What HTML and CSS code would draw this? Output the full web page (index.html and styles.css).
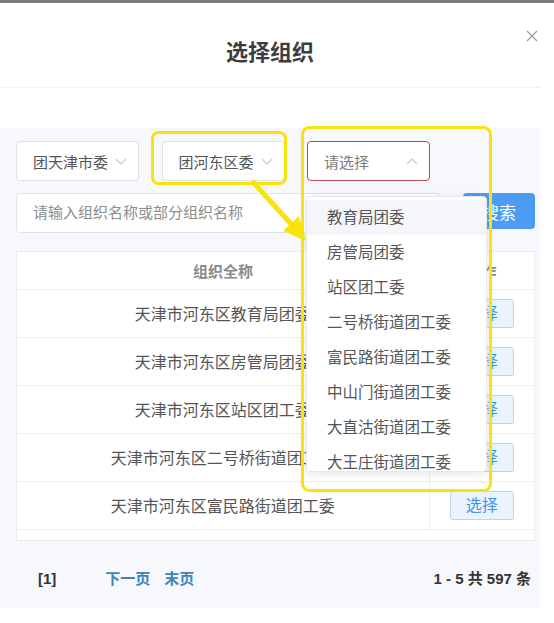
FILE: index.html
```html
<!DOCTYPE html>
<html lang="zh-CN">

<head>
    <meta charset="UTF-8" />
    <title>选择组织</title>
    <link rel="stylesheet" href="styles.css">
</head>

<body>
    <div class="page">
        <div class="topbar"></div>

        <!-- 弹窗头部 -->
        <div class="dialog-head">
            <h2 class="dialog-title">选择组织</h2>
            <a href="javascript:;" class="dialog-close">
                <svg width="12" height="12" viewBox="0 0 12 12">
                    <path d="M1 1L11 11M11 1L1 11" stroke="#9a9a9a" stroke-width="1.2" fill="none" />
                </svg>
            </a>
        </div>
        <div class="dialog-gap"></div>

        <div class="panel">
            <!-- 组织筛选 -->
            <div class="filters">
                <div class="select">
                    <span class="select-text">团天津市委</span>
                    <svg class="chevron" width="12" height="7" viewBox="0 0 12 7">
                        <path d="M1 1L6 6L11 1" stroke="#c8cbd2" stroke-width="1.2" fill="none" />
                    </svg>
                </div>
                <div class="select">
                    <span class="select-text">团河东区委</span>
                    <svg class="chevron" width="12" height="7" viewBox="0 0 12 7">
                        <path d="M1 1L6 6L11 1" stroke="#c8cbd2" stroke-width="1.2" fill="none" />
                    </svg>
                </div>
                <div class="select is-open">
                    <span class="select-text placeholder">请选择</span>
                    <svg class="chevron" width="12" height="7" viewBox="0 0 12 7">
                        <path d="M1 6L6 1L11 6" stroke="#c8cbd2" stroke-width="1.2" fill="none" />
                    </svg>
                </div>
            </div>

            <!-- 搜索 -->
            <div class="search-row">
                <div class="search-input">请输入组织名称或部分组织名称</div>
                <button class="btn-search">搜索</button>
            </div>

            <!-- 列表 -->
            <div class="table-wrap">
                <table class="org-table">
                    <thead>
                        <tr>
                            <th class="col-name">组织全称</th>
                            <th class="col-op">操作</th>
                        </tr>
                    </thead>
                    <tbody>
                        <tr>
                            <td class="col-name">天津市河东区教育局团委</td>
                            <td class="col-op"><a href="javascript:;" class="btn-pick">选择</a></td>
                        </tr>
                        <tr>
                            <td class="col-name">天津市河东区房管局团委</td>
                            <td class="col-op"><a href="javascript:;" class="btn-pick">选择</a></td>
                        </tr>
                        <tr>
                            <td class="col-name">天津市河东区站区团工委</td>
                            <td class="col-op"><a href="javascript:;" class="btn-pick">选择</a></td>
                        </tr>
                        <tr>
                            <td class="col-name">天津市河东区二号桥街道团工委</td>
                            <td class="col-op"><a href="javascript:;" class="btn-pick">选择</a></td>
                        </tr>
                        <tr>
                            <td class="col-name">天津市河东区富民路街道团工委</td>
                            <td class="col-op"><a href="javascript:;" class="btn-pick">选择</a></td>
                        </tr>
                    </tbody>
                </table>
            </div>

            <!-- 分页 -->
            <div class="pager">
                <span class="pager-cur">[1]</span>
                <a href="javascript:;" class="pager-link next">下一页</a>
                <a href="javascript:;" class="pager-link">末页</a>
                <span class="pager-total">1 - 5 共 597 条</span>
            </div>
        </div>

        <!-- 下拉菜单 -->
        <ul class="dropdown">
            <li class="hover">教育局团委</li>
            <li>房管局团委</li>
            <li>站区团工委</li>
            <li>二号桥街道团工委</li>
            <li>富民路街道团工委</li>
            <li>中山门街道团工委</li>
            <li>大直沽街道团工委</li>
            <li>大王庄街道团工委</li>
        </ul>

        <!-- 标注 -->
        <svg class="marks" width="554" height="623" viewBox="0 0 554 623">
            <rect x="152.5" y="132.5" width="133" height="51" rx="6" fill="none" stroke="#f8e40c" stroke-width="3" />
            <rect x="302.5" y="127.5" width="188" height="363" rx="7" fill="none" stroke="#f8e40c" stroke-width="3" />
            <line x1="252" y1="181" x2="293" y2="226" stroke="#f8e40c" stroke-width="5" />
            <polygon points="306,241 283,231 299,216" fill="#f8e40c" />
        </svg>
    </div>
</body>

</html>
```

FILE: styles.css
```css
* {
    margin: 0;
    padding: 0;
    box-sizing: border-box;
}

ul {
    list-style: none;
}

a {
    text-decoration: none;
}

body {
    background: #fff;
    font-family: "Liberation Sans", "Noto Sans CJK SC", sans-serif;
    color: #555;
}

.page {
    position: relative;
    width: 554px;
    height: 623px;
    overflow: hidden;
}

.topbar {
    height: 3px;
    background: #7a7a7a;
}

/* 头部 */
.dialog-head {
    position: relative;
    width: 540px;
    padding: 35px 0 19px;
    border-bottom: 1px solid #eef0f3;
    text-align: center;
}

.dialog-title {
    font-size: 22px;
    line-height: 30px;
    font-weight: bold;
    color: #3d3d3d;
}

.dialog-close {
    position: absolute;
    top: 25px;
    right: 2px;
}

.dialog-gap {
    height: 40px;
}

/* 灰色内容区 */
.panel {
    width: 540px;
    height: 480px;
    padding: 13px 5px 0 16px;
    background: #f6f8fb;
}

.filters {
    display: flex;
    gap: 22.5px;
}

.select {
    display: flex;
    align-items: center;
    justify-content: space-between;
    width: 123px;
    height: 40px;
    padding: 0 11px 0 16px;
    background: #fff;
    border: 1px solid #dfe2e8;
    border-radius: 4px;
}

.select.is-open {
    border-color: #c0474a;
}

.select-text {
    font-size: 15px;
    color: #555;
}

.select-text.placeholder {
    color: #7c7c7c;
}

.search-row {
    display: flex;
    align-items: flex-start;
    gap: 23px;
    margin-top: 12px;
}

.search-input {
    width: 424px;
    height: 40px;
    padding-left: 16px;
    line-height: 38px;
    font-size: 15px;
    color: #8d8d8d;
    background: #fff;
    border: 1px solid #dfe2e8;
    border-radius: 4px;
}

.btn-search {
    width: 72px;
    height: 36px;
    border: 0;
    border-radius: 4px;
    background: #4d9cf3;
    color: #fff;
    font-family: inherit;
    font-size: 17px;
}

/* 表格 */
.table-wrap {
    margin-top: 18px;
    width: 519px;
    height: 290px;
    background: #fff;
    border: 1px solid #e9ecf1;
}

.org-table {
    width: 100%;
    border-collapse: collapse;
}

.org-table th,
.org-table td {
    border-bottom: 1px solid #eceef2;
    text-align: center;
}

.org-table th {
    height: 37px;
    font-size: 15px;
    font-weight: bold;
    color: #8a8a8a;
}

.org-table td {
    height: 48px;
    font-size: 16px;
    color: #555;
}

.org-table .col-op {
    width: 105px;
    border-left: 1px solid #eceef2;
}

.org-table th.col-op {
    border-left: 0;
}

.btn-pick {
    display: inline-block;
    width: 64px;
    height: 29px;
    line-height: 27px;
    font-size: 16px;
    color: #3f93ec;
    background: #ebf4fe;
    border: 1px solid #b7d5f5;
    border-radius: 3px;
}

/* 分页 */
.pager {
    display: flex;
    align-items: center;
    padding: 28px 4px 0 22px;
    line-height: 20px;
    font-size: 15px;
    font-weight: bold;
}

.pager-cur {
    color: #333;
    margin-right: 49px;
}

.pager-link {
    color: #3c86b8;
}

.pager-link.next {
    margin-right: 14px;
}

.pager-total {
    margin-left: auto;
    color: #333;
}

/* 下拉 */
.dropdown {
    position: absolute;
    left: 306px;
    top: 196px;
    width: 181px;
    height: 276px;
    padding-top: 3px;
    overflow: hidden;
    background: #fff;
    border: 1px solid #e6e8ee;
    border-radius: 4px;
    box-shadow: 0 2px 10px rgba(0, 0, 0, 0.1);
}

.dropdown::before {
    content: "";
    position: absolute;
    top: -6px;
    left: 40px;
    border: 6px solid transparent;
    border-top: 0;
    border-bottom-color: #fff;
}

.dropdown li {
    height: 35px;
    line-height: 35px;
    padding-left: 20px;
    font-size: 15.5px;
    color: #555;
}

.dropdown li.hover {
    background: #f4f6fa;
}

.marks {
    position: absolute;
    top: 0;
    left: 0;
    pointer-events: none;
}
```
